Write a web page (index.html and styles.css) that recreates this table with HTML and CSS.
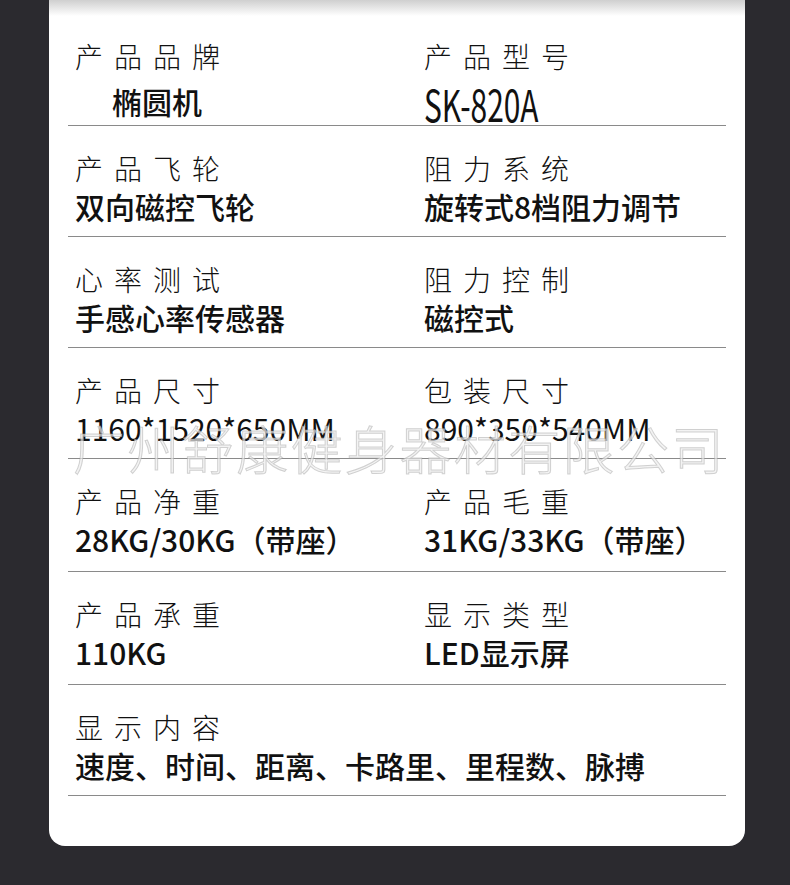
FILE: index.html
```html
<!DOCTYPE html>
<html lang="zh-CN">
<head>
<meta charset="utf-8">
<title>SK-820A 椭圆机 产品参数</title>
<link rel="stylesheet" href="styles.css">
</head>
<body>
<div class="card">
    <div class="row first">
        <div class="cell">
            <div class="label">产品品牌</div>
            <div class="value indent">椭圆机</div>
        </div>
        <div class="cell">
            <div class="label">产品型号</div>
            <div class="value"><span class="model">SK-820A</span></div>
        </div>
    </div>
    <div class="row">
        <div class="cell">
            <div class="label">产品飞轮</div>
            <div class="value">双向磁控飞轮</div>
        </div>
        <div class="cell">
            <div class="label">阻力系统</div>
            <div class="value">旋转式8档阻力调节</div>
        </div>
    </div>
    <div class="row">
        <div class="cell">
            <div class="label">心率测试</div>
            <div class="value">手感心率传感器</div>
        </div>
        <div class="cell">
            <div class="label">阻力控制</div>
            <div class="value">磁控式</div>
        </div>
    </div>
    <div class="row">
        <div class="cell">
            <div class="label">产品尺寸</div>
            <div class="value num">1160*1520*650MM</div>
        </div>
        <div class="cell">
            <div class="label">包装尺寸</div>
            <div class="value num">890*350*540MM</div>
        </div>
    </div>
    <div class="row wide">
        <div class="cell">
            <div class="label">产品净重</div>
            <div class="value">28KG/30KG（带座）</div>
        </div>
        <div class="cell">
            <div class="label">产品毛重</div>
            <div class="value">31KG/33KG（带座）</div>
        </div>
    </div>
    <div class="row wide">
        <div class="cell">
            <div class="label">产品承重</div>
            <div class="value">110KG</div>
        </div>
        <div class="cell">
            <div class="label">显示类型</div>
            <div class="value">LED显示屏</div>
        </div>
    </div>
    <div class="row single">
        <div class="cell">
            <div class="label">显示内容</div>
            <div class="value">速度、时间、距离、卡路里、里程数、脉搏</div>
        </div>
    </div>
    <div class="mark">广州舒康健身器材有限公司</div>
</div>
</body>
</html>
```
FILE: styles.css
```css
body{margin:0;padding:0;background-color:#2b2a2f;font-family:'Noto Sans CJK SC','Noto Sans',sans-serif;color:#111;}
.card{position:relative;width:658px;margin-left:49px;padding:13px 19px 50px 19px;background:#fff linear-gradient(#cfcfcf,#fff 16px) no-repeat;border-radius:0 0 16px 16px;overflow:hidden;}
.row{display:grid;grid-template-columns:349px 1fr;padding:23px 0 11px 7px;border-bottom:1px solid #8a8a8a;}
.row.first{padding-top:24px;padding-bottom:5px;}
.row.first .value{margin-top:7px;}
.row.wide{padding-bottom:13px;}
.row.single{grid-template-columns:1fr;padding-bottom:11px;}
.label{font-size:28px;line-height:38px;font-weight:300;letter-spacing:11px;white-space:nowrap;}
.value{font-size:30px;line-height:38px;font-weight:500;white-space:nowrap;}
.value.num{font-weight:400;}
.indent{padding-left:37px;}
.model{display:inline-block;vertical-align:top;font-size:44px;font-weight:400;line-height:38px;transform-origin:left center;transform:scale(0.68,1) translateY(2px);}
.mark{position:absolute;left:24px;top:422px;font-size:52px;line-height:52px;font-weight:300;letter-spacing:2.4px;color:rgba(238,238,238,0.7);-webkit-text-stroke:1px rgba(160,160,160,0.45);white-space:nowrap;pointer-events:none;}
```
